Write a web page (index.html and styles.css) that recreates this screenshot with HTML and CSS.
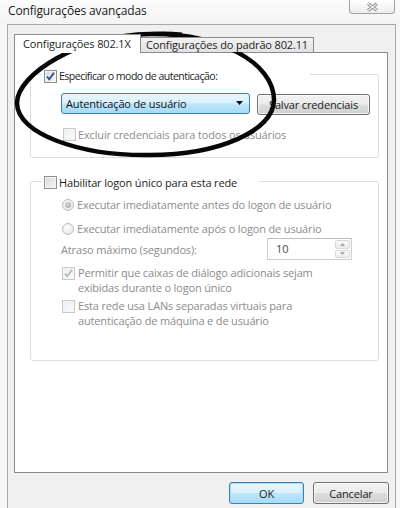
FILE: index.html
```html
<!DOCTYPE html>
<html lang="pt">
<head>
<meta charset="utf-8">
<title>Configurações avançadas</title>
<link rel="stylesheet" href="styles.css">
</head>
<body>
<div class="titlebar">
  <div class="title">Configurações avançadas</div>
  <div class="close">
    <svg width="13" height="10" viewBox="0 0 13 10"><path d="M2 1.5 L11 8.5 M11 1.5 L2 8.5" stroke="#8a8a8a" stroke-width="3.2" fill="none"/><path d="M2 1.5 L11 8.5 M11 1.5 L2 8.5" stroke="#f4f4f4" stroke-width="1.2" fill="none"/></svg>
  </div>
</div>
<div class="client">
  <div class="tabs">
    <div class="tab active">Configurações 802.1X</div>
    <div class="tab">Configurações do padrão 802.11</div>
  </div>
  <div class="panel">
    <div class="group g1">
      <div class="ghead h1">
        <span class="cb"><svg width="11" height="11" viewBox="0 0 11 11"><path d="M2 5.5 L4.3 8.3 L9 1.8" stroke="#2b4f8e" stroke-width="1.9" fill="none"/></svg></span>
        <span class="tight">Especificar o modo de autenticação:</span>
      </div>
      <div class="combo-row">
        <div class="combo"><span>Autenticação de usuário</span><svg width="8" height="5" viewBox="0 0 8 5"><path d="M0 0 H7 L3.5 4 Z" fill="#111"/></svg></div>
        <div class="btn save">Salvar credenciais</div>
      </div>
      <div class="opt dis excl"><span class="cb off"></span><span>Excluir credenciais para todos os usuários</span></div>
    </div>
    <div class="group g2">
      <div class="ghead h2">
        <span class="cb"></span>
        <span>Habilitar logon único para esta rede</span>
      </div>
      <div class="opt dis r1"><span class="radio sel"></span><span>Executar imediatamente antes do logon de usuário</span></div>
      <div class="opt dis r2"><span class="radio"></span><span>Executar imediatamente após o logon de usuário</span></div>
      <div class="delay dis">
        <span>Atraso máximo (segundos):</span>
        <div class="spin">
          <span class="spin-val">10</span>
          <div class="spin-btns">
            <span class="sb"><svg width="5" height="3" viewBox="0 0 5 3"><path d="M0 3 L2.5 0 L5 3 Z" fill="#a6a6a6"/></svg></span>
            <span class="sb"><svg width="5" height="3" viewBox="0 0 5 3"><path d="M0 0 L2.5 3 L5 0 Z" fill="#a6a6a6"/></svg></span>
          </div>
        </div>
      </div>
      <div class="opt dis multi c1"><span class="cb off"><svg width="11" height="11" viewBox="0 0 11 11"><path d="M2 5.5 L4.3 8.3 L9 1.8" stroke="#b4b4b4" stroke-width="1.6" fill="none"/></svg></span><span>Permitir que caixas de diálogo adicionais sejam<br>exibidas durante o logon único</span></div>
      <div class="opt dis multi c2"><span class="cb off"></span><span>Esta rede usa LANs separadas virtuais para<br>autenticação de máquina e de usuário</span></div>
    </div>
  </div>
  <div class="actions">
    <div class="btn ok">OK</div>
    <div class="btn cancel">Cancelar</div>
  </div>
</div>
<svg class="mark" width="400" height="508" viewBox="0 0 400 508"><path d="M150 34 C218 33 274 62 274 100 C274 131 218 155 150 155 C80 156 17 134 17 103 C17 74 80 35 150 34 Z" stroke="#070707" stroke-width="4.5" fill="none"/><path d="M128 37 C145 33 165 32 182 34" stroke="#070707" stroke-width="3" fill="none"/></svg>
</body>
</html>
```
FILE: styles.css
```css
body {
  margin: 0;
  width: 400px;
  height: 508px;
  overflow: hidden;
  position: relative;
  background: #f7f7f7;
  font-family: "Open Sans", "Noto Sans", sans-serif;
  font-size: 11px;
  letter-spacing: -0.15px;
  color: #1e1e1e;
}

.titlebar {
  display: flex;
  justify-content: space-between;
  align-items: flex-start;
  height: 24px;
  background: linear-gradient(#fbfbfb, #f4f4f4);
}

.title {
  padding: 2px 0 0 8px;
  font-size: 12px;
  line-height: 17px;
  color: #1a1a1a;
}

.close {
  width: 46px;
  height: 14px;
  box-sizing: border-box;
  margin-right: 5px;
  border: 1px solid #a2a2a2;
  border-top: none;
  border-radius: 0 0 4px 4px;
  background: linear-gradient(#ffffff, #ededed);
  display: flex;
  justify-content: center;
  align-items: center;
}

.client {
  margin-left: 7px;
  width: 389px;
  height: 484px;
  box-sizing: border-box;
  border: 1px solid #a3a9b0;
  border-bottom: none;
  background: #f0f0f0;
  padding: 9px 6px 0 6px;
}

.tabs {
  display: flex;
  align-items: flex-end;
  height: 19px;
  margin-bottom: -1px;
  position: relative;
  z-index: 1;
}

.tab {
  box-sizing: border-box;
  width: 173px;
  height: 15px;
  margin-bottom: 1px;
  border: 1px solid #898c95;
  border-left: none;
  border-bottom: none;
  background: linear-gradient(#f3f3f3, #e2e2e2);
  padding-left: 5px;
  line-height: 14px;
  white-space: nowrap;
}

.tab.active {
  width: 127px;
  height: 19px;
  margin-bottom: 0;
  border-left: 1px solid #898c95;
  background: #fff;
  padding: 1px 0 0 8px;
  line-height: 15px;
}

.panel {
  box-sizing: border-box;
  width: 374px;
  height: 421px;
  background: #fff;
  border: 1px solid #898c95;
  padding: 21px 8px 0 15px;
}

.group {
  box-sizing: border-box;
  border: 1px solid #d5dfe5;
  border-radius: 3px;
}

.g1 { height: 84px; }
.g2 { height: 180px; margin-top: 23px; }

.ghead {
  display: flex;
  align-items: center;
  gap: 2px;
  box-sizing: border-box;
  height: 15px;
  line-height: 15px;
  margin-left: 11px;
  padding-left: 2px;
  background: #fff;
  white-space: nowrap;
}

.h1 { width: 268px; margin-top: -6px; }
.h2 { width: 217px; margin-top: -7px; }

.tight {
  font-size: 10.6px;
  letter-spacing: -0.55px;
}

.cb {
  flex: none;
  width: 13px;
  height: 13px;
  box-sizing: border-box;
  border: 1px solid #8e8f8f;
  background: linear-gradient(135deg, #d6d9de, #f7f7f7);
  box-shadow: inset 0 0 0 1px #f4f4f4;
  display: flex;
  align-items: center;
  justify-content: center;
}

.cb.off {
  border-color: #c9c9c9;
  background: linear-gradient(135deg, #eeeeee, #fbfbfb);
}

.radio {
  flex: none;
  width: 12px;
  height: 12px;
  box-sizing: border-box;
  border-radius: 50%;
  border: 1px solid #bdbdbd;
  background: radial-gradient(circle at 40% 40%, #fdfdfd, #e3e3e3);
  display: flex;
  align-items: center;
  justify-content: center;
}

.radio.sel::after {
  content: "";
  width: 6px;
  height: 6px;
  border-radius: 50%;
  background: radial-gradient(circle at 40% 40%, #d8d8d8, #9c9c9c);
}

.combo-row {
  display: flex;
  align-items: flex-start;
  margin: 9px 0 0 30px;
}

.combo {
  box-sizing: border-box;
  width: 189px;
  height: 21px;
  border: 1px solid #3c7fb1;
  border-radius: 3px;
  background: linear-gradient(#eaf6fd 0%, #d9f0fc 48%, #bee6fd 52%, #a7d9f5 100%);
  display: flex;
  align-items: center;
  justify-content: space-between;
  padding: 0 5px 0 4px;
  line-height: 15px;
  color: #111;
}

.btn {
  box-sizing: border-box;
  height: 22px;
  border: 1px solid #707070;
  border-radius: 3px;
  background: linear-gradient(#f2f2f2 0%, #ebebeb 48%, #dddddd 52%, #cfcfcf 100%);
  box-shadow: inset 0 0 0 1px rgba(255, 255, 255, 0.7);
  display: flex;
  align-items: center;
  justify-content: center;
  line-height: 15px;
  color: #1a1a1a;
}

.save {
  width: 113px;
  height: 21px;
  margin: 1px 0 0 7px;
}

.opt {
  display: flex;
  align-items: center;
  gap: 3px;
  margin-left: 31px;
  line-height: 15px;
  white-space: nowrap;
}

.dis { color: #8c8c8c; }

.excl { margin: 12px 0 0 32px; gap: 2px; }
.r1 { margin-top: 7px; }
.r2 { margin-top: 9px; }

.delay {
  display: flex;
  align-items: center;
  justify-content: space-between;
  width: 291px;
  height: 22px;
  margin: 2px 0 0 30px;
  line-height: 15px;
}

.spin {
  box-sizing: border-box;
  width: 85px;
  height: 22px;
  border: 1px solid #cfcfcf;
  border-top-color: #bdbdbd;
  background: #fff;
  display: flex;
  justify-content: space-between;
  align-items: stretch;
  padding: 1px;
}

.spin-val {
  padding-left: 7px;
  line-height: 18px;
  color: #4a4a4a;
}

.spin-btns {
  width: 15px;
  display: flex;
  flex-direction: column;
  gap: 1px;
}

.sb {
  flex: 1;
  box-sizing: border-box;
  border: 1px solid #d8d8d8;
  border-radius: 2px;
  background: linear-gradient(#fafafa, #ececec);
  display: flex;
  align-items: center;
  justify-content: center;
}

.multi { align-items: flex-start; }
.multi .cb { margin-top: 2px; }
.c1 { margin-top: 5px; }
.c2 { margin-top: 3px; }

.actions {
  display: flex;
  justify-content: flex-end;
  gap: 9px;
  margin-top: 9px;
}

.ok {
  width: 75px;
  border-color: #3c7fb1;
  background: linear-gradient(#eaf6fd 0%, #d9f0fc 48%, #bee6fd 52%, #a7d9f5 100%);
  box-shadow: inset 0 0 0 1px #a6e1f7;
}

.cancel { width: 76px; }

.mark {
  position: absolute;
  left: 0;
  top: 0;
  pointer-events: none;
}
```
